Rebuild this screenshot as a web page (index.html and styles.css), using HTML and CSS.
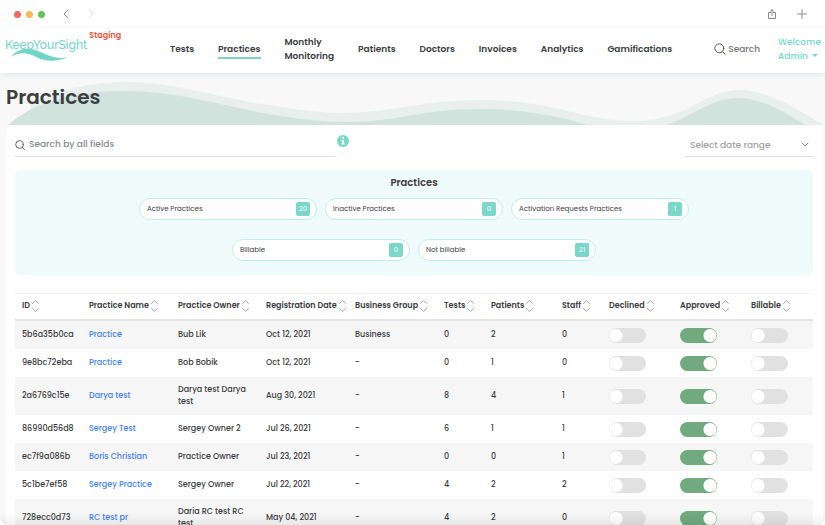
FILE: index.html
```html
<!DOCTYPE html>
<html lang="en">
<head>
<meta charset="utf-8">
<title>Practices</title>
<link rel="stylesheet" href="styles.css">
</head>
<body>
<div class="window">
  <div class="chrome">
    <span class="dot red"></span><span class="dot yellow"></span><span class="dot green"></span>
    <button class="icon-btn back" aria-label="Back"><svg width="8" height="10" viewBox="0 0 8 10"><path d="M6 1 2 5l4 4"/></svg></button>
    <button class="icon-btn forward" aria-label="Forward"><svg width="8" height="10" viewBox="0 0 8 10"><path d="m2 1 4 4-4 4"/></svg></button>
    <button class="icon-btn share" aria-label="Share"><svg width="10" height="10" viewBox="0 0 10 10"><path d="M3.500 3.500h-2v6h7v-6h-2M5 6.500V.7M3.300 2.300 5 .6l1.700 1.700"/></svg></button>
    <button class="icon-btn plus" aria-label="New tab"><svg width="10" height="10" viewBox="0 0 10 10"><path d="M5 .5v9M.5 5h9"/></svg></button>
  </div>
  <header class="header">
    <a class="brand" href="#">
      <span class="logo">KeepYourSight
        <svg class="swoosh" width="58" height="14" viewBox="0 0 58 14"><path d="M0 9C7 0 17-1 27 3c10 4 18 9 30 6-11 5-22 5-32 0C16 4 8 4 0 9Z"/></svg>
      </span>
      <span class="staging">Staging</span>
    </a>
    <nav class="nav">
      <a href="#">Tests</a>
      <a href="#" class="active">Practices</a>
      <a href="#">Monthly<br>Monitoring</a>
      <a href="#">Patients</a>
      <a href="#">Doctors</a>
      <a href="#">Invoices</a>
      <a href="#">Analytics</a>
      <a href="#">Gamifications</a>
    </nav>
    <button class="search-btn"><svg width="12" height="12" viewBox="0 0 12 12"><circle cx="5.300" cy="5.300" r="4.500"/><path d="m8.600 8.600 2.700 2.700"/></svg>Search</button>
    <button class="user">Welcome Admin <span class="caret"></span></button>
  </header>
  <div class="hero">
    <svg class="waves" viewBox="0 0 825 52" preserveAspectRatio="none">
      <path fill="#e8efed" d="M30 52V32C55 18 90 9 125 9c55 0 100 18 150 24 25 4 45 7 65 7 50 0 85-13 140-13 35 0 55 4 80 9 30 8 50 12 73 12 55 0 70-31 107-31 28 0 60 21 84 35Z"/>
      <path fill="#d2e3dd" d="M8 52C35 28 75 18 125 18c55 0 95 15 150 24 25 4 45 7 70 7 55 0 75-13 135-13 45 0 80 8 108 16ZM667 52c28-10 45-27 71-27 25 0 45 14 68 27Z"/>
    </svg>
    <h1>Practices</h1>
  </div>
  <main class="card">
    <div class="filters">
      <div class="field">
        <svg width="10" height="10" viewBox="0 0 10 10"><circle cx="4.500" cy="4.500" r="3.800"/><path d="m7.200 7.200 2.300 2.300"/></svg>
        <input type="text" aria-label="Search by all fields" placeholder="Search by all fields">
      </div>
      <svg class="info" width="12" height="12" viewBox="0 0 12 12"><circle cx="6" cy="6" r="6" fill="#7ad7ca"/><circle cx="6" cy="3" r="1.100" fill="#fff"/><path fill="#fff" d="M4.500 5h2.400v3.500h.7v1.100H4.400V8.500h.7V6h-.6Z"/></svg>
      <div class="range">
        <select aria-label="Select date range"><option>Select date range</option></select>
        <svg width="8" height="6" viewBox="0 0 8 6"><path d="m1 1 3 3 3-3"/></svg>
      </div>
    </div>
    <section class="summary">
      <h2>Practices</h2>
      <div class="pills">
        <div class="pill">Active Practices<span class="count">20</span></div>
        <div class="pill">Inactive Practices<span class="count">0</span></div>
        <div class="pill">Activation Requests Practices<span class="count">1</span></div>
        <div class="pill">Billable<span class="count">0</span></div>
        <div class="pill">Not billable<span class="count">21</span></div>
      </div>
    </section>
    <table class="table">
      <colgroup><col class="c-id"><col class="c-name"><col class="c-text"><col class="c-name"><col class="c-name"><col class="c-num"><col class="c-mid"><col class="c-num"><col class="c-mid"><col class="c-mid"><col></colgroup>
      <thead><tr id="head"></tr></thead>
      <tbody id="rows"></tbody>
    </table>
  </main>
</div>
<script src="script.js"></script>
</body>
</html>
```
FILE: styles.css
```css
* { box-sizing: border-box; }
body {
  margin: 0;
  background: #fff;
  color: #3c3d3f;
  font-family: Poppins, Inter, "Open Sans", sans-serif;
  font-size: 9px;
  line-height: 12px;
}
button, input, select {
  font: inherit;
  color: inherit;
  background: none;
  border: 0;
  padding: 0;
  margin: 0;
}
a { text-decoration: none; color: inherit; }
svg { display: block; flex: none; fill: none; stroke-linecap: round; stroke-linejoin: round; }
.window {
  position: relative;
  height: 100vh;
  overflow: hidden;
  background: #f8f8f8;
  border-radius: 0 0 8px 8px;
}
.window::after {
  content: "";
  position: absolute;
  inset: auto 0 0;
  height: 12px;
  background: linear-gradient(transparent, rgba(0, 0, 0, 0.06));
  pointer-events: none;
}
.chrome {
  display: flex;
  align-items: center;
  gap: 5px;
  height: 28px;
  padding: 0 18px 0 14px;
  background: #fff;
}
.dot { width: 7px; height: 7px; border-radius: 50%; }
.red { background: #ee6a5f; }
.yellow { background: #f5bd4f; }
.green { background: #61c454; }
.icon-btn svg { stroke: #8a8a8a; stroke-width: 1; }
.back { margin-left: 12px; }
.forward { margin-left: 12px; }
.forward svg { stroke: #dedede; }
.share { margin-left: auto; }
.plus { margin-left: 15px; }
.header {
  position: relative;
  display: flex;
  align-items: center;
  height: 45px;
  padding-bottom: 3px;
  background: #fff;
  box-shadow: 0 2px 6px rgba(60, 80, 100, 0.1);
  line-height: 14px;
}
.brand {
  display: flex;
  flex: none;
  align-self: flex-start;
  align-items: flex-start;
  width: 170px;
  padding-left: 5px;
}
.logo {
  position: relative;
  padding-top: 10px;
  color: #72d3c7;
  font: 500 12px/14px Raleway, Lato, sans-serif;
}
.swoosh { position: absolute; left: 6px; top: 20px; fill: #72d3c7; }
.staging { padding: 1px 0 0 2px; color: #ee5637; font-size: 8px; font-weight: 600; }
.nav {
  display: flex;
  flex: 1;
  align-items: center;
  justify-content: space-between;
  font-weight: 600;
}
.nav a { border-bottom: 2px solid transparent; border-top: 2px solid transparent; padding: 1px 0; }
.nav .active { border-bottom-color: #78d6c9; }
.search-btn {
  display: flex;
  align-items: center;
  gap: 2px;
  margin-left: 42px;
  color: #777;
  font-weight: 500;
}
.search-btn svg { stroke: #555; stroke-width: 1; }
.user {
  width: 47px;
  margin-left: 18px;
  color: #72d9cb;
  font-weight: 500;
  text-align: left;
}
.caret {
  display: inline-block;
  margin-left: 2px;
  vertical-align: 2px;
  border: 3px solid transparent;
  border-top-color: #72d9cb;
  border-bottom: 0;
}
.hero { display: grid; height: 52px; }
.hero > * { grid-area: 1 / 1; }
.waves { width: 100%; height: 52px; }
h1 {
  z-index: 1;
  margin: 11px 6px;
  font-size: 20px;
  line-height: 26px;
  font-weight: 600;
}
.card {
  margin: 0 2px 0 6px;
  padding: 6px 10px 0 9px;
  background: #fff;
  border-radius: 6px;
}
.filters { display: flex; align-items: flex-start; }
.field {
  display: flex;
  align-items: center;
  gap: 4px;
  flex: 0 1 320px;
  height: 26px;
  padding-top: 2px;
  border-bottom: 1px solid #dedfe1;
}
.field svg { stroke: #666; }
.field input { flex: 1; height: 20px; outline: 0; font-weight: 500; }
.field input::placeholder { color: #858a91; opacity: 1; }
.info { margin: 4px 0 0 2px; }
.range {
  display: flex;
  align-items: center;
  width: 128px;
  height: 26px;
  margin-left: auto;
  padding: 2px 4px 0 5px;
  border-bottom: 1px solid #dedfe1;
}
.range select { flex: 1; min-width: 0; appearance: none; color: #a2a2a2; font-weight: 500; }
.range svg { stroke: #888; }
.summary {
  margin-top: 13px;
  height: 105px;
  background: #effbfb;
  border-radius: 6px;
}
h2 {
  margin: 0 0 8px;
  padding-top: 6px;
  font-size: 10px;
  line-height: 14px;
  font-weight: 600;
  text-align: center;
}
.pills {
  display: flex;
  flex-wrap: wrap;
  justify-content: center;
  gap: 19px 8px;
  max-width: 560px;
  margin: 0 auto;
}
.pill {
  display: flex;
  align-items: center;
  justify-content: space-between;
  width: 178px;
  height: 22px;
  padding: 0 6px 0 7px;
  background: #fff;
  border: 1px solid #c3efe8;
  border-radius: 11px;
  font-size: 7px;
}
.count {
  width: 14px;
  height: 14px;
  background: #7ad7ca;
  border-radius: 2px;
  color: #fff;
  line-height: 13px;
  text-align: center;
}
.table {
  width: 100%;
  margin-top: 18px;
  table-layout: fixed;
  border-collapse: collapse;
  border-top: 1px solid #efefef;
}
.c-id { width: 67px; }
.c-name { width: 89px; }
.c-text { width: 88px; }
.c-num { width: 47px; }
.c-mid { width: 71px; }
th {
  height: 26px;
  padding: 0 0 0 7px;
  border-bottom: 2px solid #e4e5e6;
  font-size: 8px;
  font-weight: 600;
  text-align: left;
  white-space: nowrap;
}
.sort { display: flex; align-items: center; gap: 2px; font-weight: inherit; }
.sort svg { stroke: #aaa; stroke-width: 1; }
td { height: 28px; padding: 7px 2px 7px 7px; font-size: 8px; font-weight: 500; }
td a { color: #4283f3; }
tbody tr:nth-child(odd) { background: #f6f6f6; }
.toggle-cell { padding: 7px 0 6px 7px; }
.toggle {
  display: block;
  appearance: none;
  width: 37px;
  height: 15px;
  border-radius: 8px;
  background: radial-gradient(circle at 7px 50%, #fff 6px, transparent 7px) #e1e1e1;
}
.toggle:checked { background: radial-gradient(circle at 30px 50%, #fff 6px, transparent 7px) #71aa7f; }
```
FILE: script.js
```js
const columns = ["ID", "Practice Name", "Practice Owner", "Registration Date", "Business Group",
  "Tests", "Patients", "Staff", "Declined", "Approved", "Billable"];

const practices = [
  ["5b6a35b0ca", "Practice", "Bub Lik", "Oct 12, 2021", "Business", 0, 2, 0],
  ["9e8bc72eba", "Practice", "Bob Bobik", "Oct 12, 2021", "-", 0, 1, 0],
  ["2a6769c15e", "Darya test", "Darya test Darya test", "Aug 30, 2021", "-", 8, 4, 1],
  ["86990d56d8", "Sergey Test", "Sergey Owner 2", "Jul 26, 2021", "-", 6, 1, 1],
  ["ec7f9a086b", "Boris Christian", "Practice Owner", "Jul 23, 2021", "-", 0, 0, 1],
  ["5c1be7ef58", "Sergey Practice", "Sergey Owner", "Jul 22, 2021", "-", 4, 2, 2],
  ["728ecc0d73", "RC test pr", "Daria RC test RC test", "May 04, 2021", "-", 4, 2, 0],
];

const sortIcon = '<svg width="7" height="12" viewBox="0 0 7 12"><path d="m.5 3.500 3-3 3 3M.5 8.500l3 3 3-3"/></svg>';

document.getElementById("head").innerHTML = columns
  .map((name) => `<th><button class="sort">${name}${sortIcon}</button></th>`)
  .join("");

const toggle = (label, id, on) =>
  `<td class="toggle-cell"><input type="checkbox" class="toggle" aria-label="${label} ${id}"${on ? " checked" : ""}></td>`;

document.getElementById("rows").innerHTML = practices
  .map((row) => {
    const cells = row.map((value, i) => `<td>${i === 1 ? `<a href="#">${value}</a>` : value}</td>`).join("");
    return `<tr>${cells}${toggle("Declined", row[0], false)}${toggle("Approved", row[0], true)}${toggle("Billable", row[0], false)}</tr>`;
  })
  .join("");
```
